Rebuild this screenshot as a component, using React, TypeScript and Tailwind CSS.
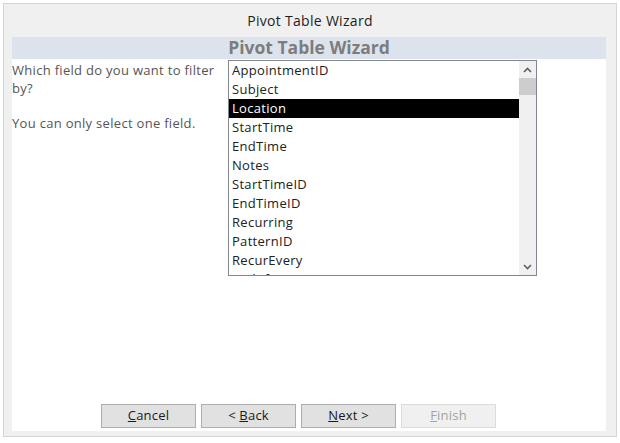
import React from "react";

const items = [
  "AppointmentID",
  "Subject",
  "Location",
  "StartTime",
  "EndTime",
  "Notes",
  "StartTimeID",
  "EndTimeID",
  "Recurring",
  "PatternID",
  "RecurEvery",
  "EndAfter",
];

function Btn({ label, disabled }: { label: [string, string, string]; disabled?: boolean }) {
  return (
    <div
      className={
        "w-[95px] h-[24px] flex items-center justify-center text-[13px] tracking-[0.2px] border " +
        (disabled ? "border-[#dcdcdc] bg-[#f0f0f0] text-[#a3a3a3]" : "border-[#adadad] bg-[#e1e1e1] text-[#1a1a1a]")
      }
    >
      <span>
        {label[0]}
        <span className="underline">{label[1]}</span>
        {label[2]}
      </span>
    </div>
  );
}

export default function App() {
  return (
    <div className="w-[620px] h-[443px] bg-white pt-[3px] pl-[3px]" style={{ fontFamily: '"Open Sans", "Noto Sans", sans-serif' }}>
      <div className="w-[614px] h-[434px] border border-[#d5d5d5] bg-[#f0f0f0] flex flex-col">
        <div className="h-[32px] flex items-center justify-center text-[14px] tracking-[0.3px] text-[#1e1e1e] pt-[1px]">Pivot Table Wizard</div>
        <div className="ml-[8px] w-[594px] h-[395px] bg-white border-t border-[#f0f0f0] flex flex-col">
          <div className="h-[22px] bg-[#dce3ec] flex items-center justify-center text-[17.5px] font-bold text-[#7d7d7d] leading-none">
            Pivot Table Wizard
          </div>
          <div className="flex pt-[1px]">
            <div className="w-[216px] text-[13px] tracking-[0.3px] leading-[18px] text-[#555] pt-[1px]">
              <div>Which field do you want to filter</div>
              <div>by?</div>
              <div className="mt-[17px]">You can only select one field.</div>
            </div>
            <div className="w-[309px] h-[216px] border border-[#828790] flex overflow-hidden">
              <div className="flex-1 overflow-hidden">
                {items.map((it) => (
                  <div
                    key={it}
                    className={
                      "h-[19px] leading-[19px] text-[13px] tracking-[0.3px] pl-[3px] " +
                      (it === "Location" ? "bg-black text-white" : "text-[#222]")
                    }
                  >
                    {it}
                  </div>
                ))}
              </div>
              <div className="w-[17px] bg-[#f0f0f0] flex flex-col">
                <div className="h-[17px] flex items-center justify-center">
                  <svg width="9" height="6" viewBox="0 0 9 6">
                    <path d="M1 5 L4.5 1.5 L8 5" fill="none" stroke="#606060" strokeWidth="1.6" />
                  </svg>
                </div>
                <div className="h-[17px] bg-[#cdcdcd]" />
                <div className="flex-1" />
                <div className="h-[17px] flex items-center justify-center">
                  <svg width="9" height="6" viewBox="0 0 9 6">
                    <path d="M1 1 L4.5 4.5 L8 1" fill="none" stroke="#606060" strokeWidth="1.6" />
                  </svg>
                </div>
              </div>
            </div>
          </div>
          <div className="flex-1" />
          <div className="flex gap-[5px] pl-[89px] pb-[3px]">
            <Btn label={["", "C", "ancel"]} />
            <Btn label={["< ", "B", "ack"]} />
            <Btn label={["", "N", "ext >"]} />
            <Btn label={["", "F", "inish"]} disabled />
          </div>
        </div>
      </div>
    </div>
  );
}
